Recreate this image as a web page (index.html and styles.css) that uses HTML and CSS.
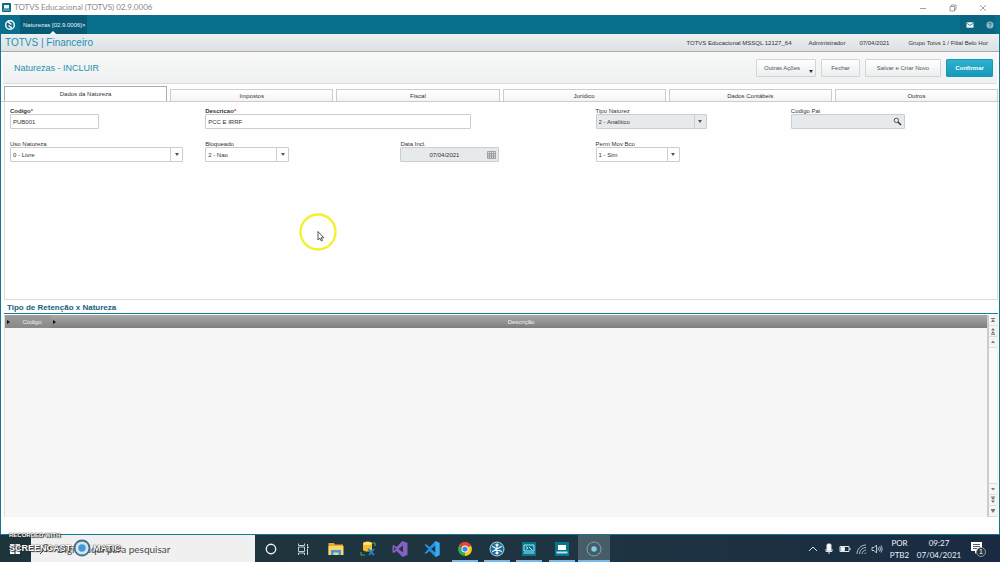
FILE: index.html
```html
<!DOCTYPE html>
<html lang="pt-BR">
<head>
<meta charset="utf-8">
<title>TOTVS Educacional (TOTVS) 02.9.0006</title>
<link rel="stylesheet" href="styles.css">
</head>
<body>
<header class="titlebar">
  <svg class="app-icon" viewBox="0 0 9 9"><rect width="9" height="9" rx="1" fill="#0d6785"/><path d="M2 2h5v3.500H2z" fill="#e9f7fa"/><path d="M1 6.500h7v1H1z" fill="#8ecbd9"/></svg>
  <span class="window-title">TOTVS Educacional (TOTVS) 02.9.0006</span>
  <div class="window-buttons">
    <button aria-label="Minimizar"><svg viewBox="0 0 8 8"><path d="M1 4.500h6"/></svg></button>
    <button aria-label="Restaurar"><svg viewBox="0 0 8 8"><path d="M1 2.500h4.500V7H1zM2.500 2.500V1H7v4.500H5.500"/></svg></button>
    <button aria-label="Fechar janela"><svg viewBox="0 0 8 8"><path d="M1 1l6 6M7 1L1 7"/></svg></button>
  </div>
</header>

<nav class="topbar">
  <button class="logo" aria-label="Menu"><svg viewBox="0 0 12 12"><circle cx="6" cy="6" r="4.300" fill="none" stroke="#fff" stroke-width="1.400"/><path d="M4.200 3.200l3.300 2.300M7.800 8.800L4.500 6.500" fill="none" stroke="#fff" stroke-width="1.500"/></svg></button>
  <div class="doc-tab"><span>Naturezas [02.9.0006]</span><button aria-label="Fechar aba">×</button></div>
  <div class="topbar-actions">
    <button aria-label="Mensagens"><svg viewBox="0 0 10 10"><path d="M1.500 2.300h7v5.400h-7z" fill="#eef8fa"/><path d="M1.500 3l3.500 2.500L8.500 3" fill="none" stroke="#0b6482" stroke-width=".8"/></svg></button>
    <button aria-label="Ajuda"><svg viewBox="0 0 10 10"><circle cx="5" cy="5" r="3.500" fill="#8fb8c6"/><path d="M3.900 4.100c0-1.500 2.300-1.400 2.200 0 0 .8-1.100.8-1.100 1.700M5 6.500v.8" fill="none" stroke="#0b5873" stroke-width=".8"/></svg></button>
  </div>
</nav>

<main class="app">
  <div class="brandbar">
    <h1>TOTVS | Financeiro</h1>
    <div class="session"><span>TOTVS Educacional MSSQL 12127_64</span><span>Administrador</span><span>07/04/2021</span><span>Grupo Totvs 1 / Filial Belo Hor</span></div>
  </div>
  <div class="pagehead">
    <h2>Naturezas - INCLUIR</h2>
    <div class="actions">
      <button class="btn more">Outras Ações<i class="caret"></i></button>
      <button class="btn short">Fechar</button>
      <button class="btn long">Salvar e Criar Novo</button>
      <button class="btn primary">Confirmar</button>
    </div>
  </div>
  <div class="tabs" role="tablist">
    <button class="tab active" role="tab">Dados da Natureza</button>
    <button class="tab" role="tab">Impostos</button>
    <button class="tab" role="tab">Fiscal</button>
    <button class="tab" role="tab">Jurídico</button>
    <button class="tab" role="tab">Dados Contábeis</button>
    <button class="tab" role="tab">Outros</button>
  </div>
  <form class="panel">
    <div class="field w-code"><label class="req" for="codigo">Codigo<b>*</b></label><div class="box"><input id="codigo" value="PUB001"></div></div>
    <div class="field w-desc"><label class="req" for="descricao">Descricao<b>*</b></label><div class="box"><input id="descricao" value="PCC E IRRF"></div></div>
    <div class="field w-tipo"><label for="tipo">Tipo Naturez</label><div class="box off pick"><select id="tipo" disabled><option>2 - Analítico</option></select><i class="drop"></i></div></div>
    <div class="field w-pai"><label for="pai">Codigo Pai</label><div class="box off"><input id="pai" disabled><svg class="field-icon" viewBox="0 0 9 9"><circle cx="3.400" cy="3.400" r="2.200" fill="none" stroke="#555" stroke-width="1"/><path d="M5 5l3 3" stroke="#333" stroke-width="1.500"/></svg></div></div>
    <div class="field w-uso"><label for="uso">Uso Natureza</label><div class="box pick"><select id="uso"><option>0 - Livre</option></select><i class="drop"></i></div></div>
    <div class="field w-pick"><label for="bloq">Bloqueado</label><div class="box pick"><select id="bloq"><option>2 - Nao</option></select><i class="drop"></i></div></div>
    <div class="field w-data"><label for="data">Data Incl.</label><div class="box off date"><input id="data" value="07/04/2021" disabled><svg class="field-icon" viewBox="0 0 9 9"><path d="M.500 1.500h8v7h-8zM.500 3.500h8M.500 5.200h8M.500 6.900h8M2.500 1.500v7M4.500 1.500v7M6.500 1.500v7" fill="none" stroke="#858b90" stroke-width=".7"/></svg></div></div>
    <div class="field w-pick"><label for="perm">Perm Mov Bco</label><div class="box pick"><select id="perm"><option>1 - Sim</option></select><i class="drop"></i></div></div>
  </form>
  <h3>Tipo de Retenção x Natureza</h3>
  <section class="grid">
    <div class="grid-body">
      <table><thead><tr><th class="col-code"><i></i>Código</th><th class="col-desc"><i></i>Descrição</th></tr></thead></table>
    </div>
    <div class="scroller">
      <button aria-label="Primeiro"><svg viewBox="0 0 8 8"><path d="M2 2h4v1H2zM4 3l2 3H2z"/></svg></button>
      <button aria-label="Página acima"><svg viewBox="0 0 8 8"><path d="M4 1l2 2.500H2zM4 4l2 2.500H2zM2 7h4v.700H2z"/></svg></button>
      <button aria-label="Acima"><svg viewBox="0 0 8 8"><path d="M4 2.500L6 5H2z"/></svg></button>
      <div class="track"></div>
      <button aria-label="Abaixo"><svg viewBox="0 0 8 8"><path d="M4 5.500L6 3H2z"/></svg></button>
      <button aria-label="Página abaixo"><svg viewBox="0 0 8 8"><path d="M4 7l2-2.500H2zM4 4l2-2.500H2zM2 .500h4v.700H2z"/></svg></button>
      <button aria-label="Último"><svg viewBox="0 0 8 8"><path d="M2 2h4v1H2zM4 6l2-3H2z"/></svg></button>
    </div>
  </section>
</main>

<footer class="taskbar">
  <button class="start" aria-label="Iniciar"><svg viewBox="0 0 12 12"><path d="M1 1h4.500v4.500H1zM6.500 1H11v4.500H6.500zM1 6.500h4.500V11H1zM6.500 6.500H11V11H6.500z" fill="#fff"/></svg></button>
  <label class="search"><svg viewBox="0 0 12 12"><circle cx="7" cy="5" r="3.500"/><path d="M4.500 7.500L1 11"/></svg><input placeholder="Digite aqui para pesquisar" aria-label="Digite aqui para pesquisar"></label>
  <div class="apps">
    <button aria-label="Cortana"><svg viewBox="0 0 16 16"><circle cx="8" cy="8" r="4.700" fill="none" stroke="#eef4f6" stroke-width="1.400"/></svg></button>
    <button aria-label="Visão de tarefas"><svg viewBox="0 0 16 16"><path d="M3.500 2.500v2h6v-2M3.500 6h6v4.500h-6zM3.500 14v-2h6v2M12.500 3v2M12.500 7.500V14" fill="none" stroke="#c5d1d5"/><path d="M12 5.500h1.500V7H12z" fill="#fff"/></svg></button>
    <button aria-label="Explorador"><svg viewBox="0 0 16 16"><path d="M.500 2h5.500l1 1.500h8V14H.500z" fill="#e5a92c"/><path d="M.500 5h15v9H.500z" fill="#fbd56b"/><path d="M3 14V9h10v5h-2.500v-2.500h-5V14z" fill="#3e9bdc"/></svg></button>
    <button aria-label="SQL"><svg viewBox="0 0 16 16"><path d="M3 2c2-2 7-2 9 0v7c-2 2-7 2-9 0z" fill="#f4bd30"/><ellipse cx="7.500" cy="2.500" rx="4.500" ry="1.600" fill="#ffe17c"/><path d="M8 8l6 6M14 8l-5 6" stroke="#2587c2" stroke-width="1.800"/><path d="M1 11v3h4M12 2h3v3" fill="none" stroke="#579d4d" stroke-width="1.200"/></svg></button>
    <button aria-label="Visual Studio"><svg viewBox="0 0 16 16"><path d="M10.500 0L15.500 2v12l-5 2-6-6-2.500 2-1.500-.7V4.700L2 4l2.500 2z" fill="#8661c5"/><path d="M11 4.500L6.500 8l4.500 3.500zM2 6v4l2-2z" fill="#24383f"/></svg></button>
    <button aria-label="Visual Studio Code"><svg viewBox="0 0 16 16"><path d="M11.500 0l4 2v12l-4 2-6-6L2 13 .500 12l4-4-4-4L2 3l3.500 3z" fill="#2492dc"/><path d="M11.500 4.500L7 8l4.500 3.500z" fill="#1d3442"/><path d="M11.500 0l4 2v12l-4 2z" fill="#35aef0"/></svg></button>
    <button class="open" aria-label="Chrome"><svg viewBox="0 0 16 16"><path d="M8 8L2 4.500A7 7 0 0 1 14 4.500z" fill="#e64535"/><path d="M8 8V15A7 7 0 0 1 2 4.500z" fill="#38a852"/><path d="M8 8L14 4.500A7 7 0 0 1 8 15z" fill="#f9c81f"/><path d="M2 4.500A7 7 0 0 1 14 4.500H8z" fill="#e64535"/><circle cx="8" cy="8" r="3.500" fill="#fff"/><circle cx="8" cy="8" r="2.600" fill="#4285e8"/></svg></button>
    <button class="open" aria-label="Servidor"><svg viewBox="0 0 16 16"><circle cx="8" cy="8" r="7" fill="#1c6d9b" stroke="#b9d2df"/><path d="M8 2.500v11M3.200 5.200l9.600 5.600M12.800 5.200l-9.600 5.600M6.500 3.500L8 5l1.500-1.500M6.500 12.500L8 11l1.500 1.500" fill="none" stroke="#eff9ff" stroke-width="1.200"/></svg></button>
    <button class="open" aria-label="Console"><svg viewBox="0 0 16 16"><path d="M1 1h14v14H1z" fill="#08758f"/><path d="M3 4h10v6H3zM2.500 12h11M5 5.500L7 7 5 8.500M8 6l3 3" fill="none" stroke="#a9e6ef"/></svg></button>
    <button class="open" aria-label="SmartClient"><svg viewBox="0 0 16 16"><path d="M1 1h14v14H1z" fill="#08758f"/><path d="M4 4h8v5H4z" fill="#fff"/><path d="M2.500 10.500h11v2h-11z" fill="#b9e6ee"/></svg></button>
    <button class="open current" aria-label="Gravador"><svg viewBox="0 0 16 16"><circle cx="8" cy="8" r="7" fill="none" stroke="#76a8b8"/><circle cx="8" cy="8" r="2.700" fill="#7fd0e2"/></svg></button>
  </div>
  <div class="tray">
    <svg viewBox="0 0 12 12"><path d="M2 8l4-4 4 4"/></svg>
    <svg viewBox="0 0 12 12"><rect x="4" y="1" width="4" height="7" rx="1" fill="#fff"/><path d="M3 6v2.500h6V6M6 8.500V11"/></svg>
    <svg viewBox="0 0 12 12"><path d="M1 3.500h9v5H1zM11 5v2"/><path d="M2 4.500h3.500v3H2z" fill="#fff"/></svg>
    <svg viewBox="0 0 12 12"><path d="M2 11C2 6 6 2 11 2M4.500 11C4.500 7.500 7.500 4.500 11 4.500M7 11C7 9 9 7 11 7M9.500 11l1.500-1.500" stroke-width=".8"/></svg>
    <svg viewBox="0 0 12 12"><path d="M1 4.500h2L5.500 2v8L3 7.500H1zM7 4.500q1 1.500 0 3M8.500 3.500q2 2.500 0 5M10 2.500q2.500 3.500 0 7" stroke-width=".8"/></svg>
    <div class="stack lang"><span>POR</span><span>PTB2</span></div>
    <div class="stack clock"><span>09:27</span><span>07/04/2021</span></div>
    <button class="notes" aria-label="Notificações"><svg viewBox="0 0 16 16"><path d="M1 1h11v9H7l-2 3v-3H1z" fill="#fff" stroke="none"/><path d="M3 3.500h7M3 5.500h7M3 7.500h4" stroke="#233a4b" stroke-width=".8"/><circle cx="11" cy="11" r="4.500" fill="#27343f" stroke="#a7b1b9" stroke-width=".8"/></svg><span>1</span></button>
  </div>
</footer>

<div class="watermark">
  <span class="wm-small">RECORDED WITH</span>
  <div class="wm-row"><span>SCREENCAST</span><svg viewBox="0 0 20 20"><circle cx="10" cy="10" r="7.500" fill="#d7e3e8" stroke="#3d7089" stroke-width="1.800"/><circle cx="10" cy="10" r="3.700" fill="#3f9bd8"/></svg><span>MATIC</span></div>
</div>
<svg class="pointer" viewBox="0 0 38 38"><circle cx="19" cy="19" r="17.500" fill="none" stroke="#f5f02c" stroke-width="2.300"/><path d="M19 18.500v8.500l2-1.800 1.300 2.800 1.300-.6-1.300-2.700h2.500z" fill="#fff" stroke="#444" stroke-width=".9"/></svg>
</body>
</html>
```

FILE: styles.css
```css
* { box-sizing: border-box; }
body {
  margin: 0;
  min-height: 100vh;
  display: flex;
  flex-direction: column;
  position: relative;
  font: 6px/8px "Liberation Sans", Arial, sans-serif;
  color: #333;
  background: #fefefe;
}
button, input, select { font: inherit; color: inherit; margin: 0; padding: 0; border: 0; background: none; border-radius: 0; }
svg { display: block; }
h1, h2, h3 { margin: 0; font-weight: 400; color: #1e91b0; }

.titlebar { display: flex; align-items: center; height: 15px; padding: 0 13px 0 2px; gap: 3px; background: #fff; }
.app-icon { width: 9px; height: 9px; }
.window-title { flex: 1; font: 8px/15px Lato, sans-serif; color: #888; }
.window-buttons { display: flex; gap: 22px; }
.window-buttons svg { width: 8px; height: 8px; fill: none; stroke: #888; stroke-width: .8; }

.topbar { display: flex; height: 19px; padding: 0 5px 0 4px; background: #0a6f8c; }
.logo { width: 12px; margin-right: 4px; }
.logo svg { width: 12px; height: 12px; }
.doc-tab { position: relative; display: flex; align-items: center; justify-content: space-between; width: 67px; padding: 0 2px 0 3px; color: #e5f3f7; background: #075b77; white-space: nowrap; }
.doc-tab::after { content: ""; position: absolute; left: 30px; bottom: 0; border: 3px solid transparent; border-top: 0; border-bottom-color: #fff; }
.topbar-actions { display: flex; margin-left: auto; gap: 10px; padding-left: 5px; background: #096581; }
.topbar-actions svg { width: 10px; height: 10px; }

.app { flex: 1; display: flex; flex-direction: column; border: 1px solid #137791; border-top: 0; background: #fefefe; }
.brandbar { display: flex; align-items: center; justify-content: space-between; height: 18px; padding: 0 11px 0 4px; border-bottom: 1px solid #aaa; background: linear-gradient(#eceff1, #dde1e5); }
h1 { font-size: 10px; line-height: 17px; }
.session { display: grid; grid-template-columns: 122px 51px 49px auto; }
.pagehead { display: flex; align-items: center; justify-content: space-between; height: 32px; margin: 0 2px; padding: 0 4px 0 11px; border-bottom: 1px solid #ddd; background: linear-gradient(#f8f8f8, #eef0f1); }
h2 { font-size: 9px; line-height: 16px; }
.actions { display: flex; gap: 5px; }
.btn { position: relative; height: 18px; border: 1px solid #d2d4d5; border-radius: 1px; background: linear-gradient(#fff, #eceeef); color: #555; }
.more { width: 60px; padding-right: 8px; }
.short { width: 39px; }
.long { width: 76px; }
.primary { width: 47px; border-color: #1899b7; background: linear-gradient(#2fb1cf, #169abb); color: #fff; font-weight: 700; }
.caret { position: absolute; right: 2px; bottom: 3px; border: 2px solid transparent; border-top: 3px solid #333; border-bottom: 0; }

.tabs { display: flex; align-items: flex-end; gap: 3px; height: 18px; padding: 0 1px 0 3px; border-bottom: 1px solid #ccc; }
.tab { flex: 1; height: 12px; border: 1px solid #ccc; border-bottom: 0; background: linear-gradient(#fff, #f4f4f4); }
.tab.active { height: 15px; border-color: #a5adb2; background: #fff; }

.panel { display: grid; grid-template-columns: repeat(5, 1fr); align-content: start; row-gap: 12px; height: 198px; margin: 0 1px 0 3px; padding: 6px 11px 0 5px; border: 1px solid #ddd; border-top: 0; }
.field label { display: block; line-height: 6px; }
.req { font-weight: 700; }
.req b { color: #d33; }
.box { display: flex; align-items: center; height: 15px; border: 1px solid #c9ced1; border-radius: 1px; background: #fff; }
.box input, .box select { flex: 1; width: 100%; min-width: 0; height: 13px; padding: 0 2px; appearance: none; color: #333; opacity: 1; }
.off { background: #e6eaed; }
.drop { display: flex; align-items: center; justify-content: center; width: 12px; height: 13px; border-left: 1px solid #ccd0d3; }
.drop::before { content: ""; border: 2px solid transparent; border-top: 3px solid #555; border-bottom: 0; }
.field-icon { width: 9px; height: 9px; margin-right: 2px; }
.date input { text-align: center; }
.w-code .box { width: 89px; }
.w-desc { grid-column: span 2; }
.w-desc .box { width: 266px; }
.w-tipo .box { width: 111px; }
.w-pai .box { width: 114px; }
.w-uso .box { width: 173px; }
.w-pick .box { width: 84px; }
.w-data .box { width: 99px; }

h3 { margin: 0 1px 0 3px; padding: 3px 3px 1px; font-size: 8px; line-height: 9px; font-weight: 700; color: #17637a; border-bottom: 1px solid #147f9c; }
.grid { flex: 1; display: flex; margin: 1px 1px 17px 3px; }
.grid-body { flex: 1; background: #f6f6f6; border-left: 1px solid #ddd; border-right: 2px solid #ccc; }
table { width: 100%; border-collapse: collapse; }
th { position: relative; height: 13px; padding: 0; font-weight: 400; color: #f2f2f2; background: linear-gradient(#aaa, #7d7d7d); }
.col-code { width: 46px; padding-left: 8px; background: linear-gradient(#9c9c9c, #888); }
.col-desc { padding-left: 4px; }
th i { position: absolute; left: 2px; top: 5px; border: 2px solid transparent; border-left: 3px solid #111; border-right: 0; }
.scroller { display: flex; flex-direction: column; width: 9px; background: #fafafa; border-right: 1px solid #eee; }
.scroller button { height: 11px; border-bottom: 1px solid #ddd; background: #f5f5f5; }
.scroller svg { width: 8px; height: 8px; fill: #777; }
.track { flex: 1; border-bottom: 1px solid #ddd; }

.taskbar { display: flex; height: 27px; background: linear-gradient(90deg, #1e343b, #1e3441 58%, #192b43); color: #edf2f4; }
.start { width: 31px; padding-left: 9px; }
.start svg { width: 12px; height: 12px; }
.search { display: flex; align-items: center; gap: 6px; width: 224px; padding-left: 8px; background: #f0f0f0; }
.search svg { width: 12px; height: 12px; fill: none; stroke: #444; }
.search input { flex: 1; min-width: 0; font: 10px/16px Lato, sans-serif; }
.search input::placeholder { color: #4b4b4b; opacity: 1; }
.apps { display: grid; grid-template-columns: repeat(11, 1fr); width: 355px; }
.apps button { display: flex; align-items: center; justify-content: center; }
.apps svg { width: 16px; height: 16px; }
.open { background: linear-gradient(#79b8e8, #79b8e8) center bottom / 26px 2px no-repeat; }
.current { background-color: #475c67; background-size: 100% 2px; }
.tray { display: flex; align-items: center; gap: 4px; margin-left: auto; padding-right: 12px; }
.tray svg { width: 12px; height: 12px; fill: none; stroke: #dce5ea; }
.stack { display: flex; flex-direction: column; align-items: center; font: 8px/12px Lato, sans-serif; }
.lang { width: 21px; margin-left: 2px; }
.clock { width: 42px; margin-left: 4px; }
.notes { position: relative; width: 18px; margin-left: 6px; }
.tray .notes svg { width: 16px; height: 16px; }
.notes span { position: absolute; left: 9px; top: 7px; font-size: 7px; color: #fff; }

.watermark { position: absolute; left: 9px; bottom: 4px; color: #fff; font-weight: 700; text-shadow: 0 0 1px #222, 0 0 1px #222, 1px 1px 1px #333; pointer-events: none; }
.wm-small { display: block; font-size: 6px; line-height: 6px; }
.wm-row { display: flex; align-items: center; gap: 1px; font-size: 9px; line-height: 18px; }
.wm-row svg { width: 20px; height: 20px; }
.pointer { position: absolute; left: 299px; top: 213px; width: 38px; height: 38px; pointer-events: none; }
```
